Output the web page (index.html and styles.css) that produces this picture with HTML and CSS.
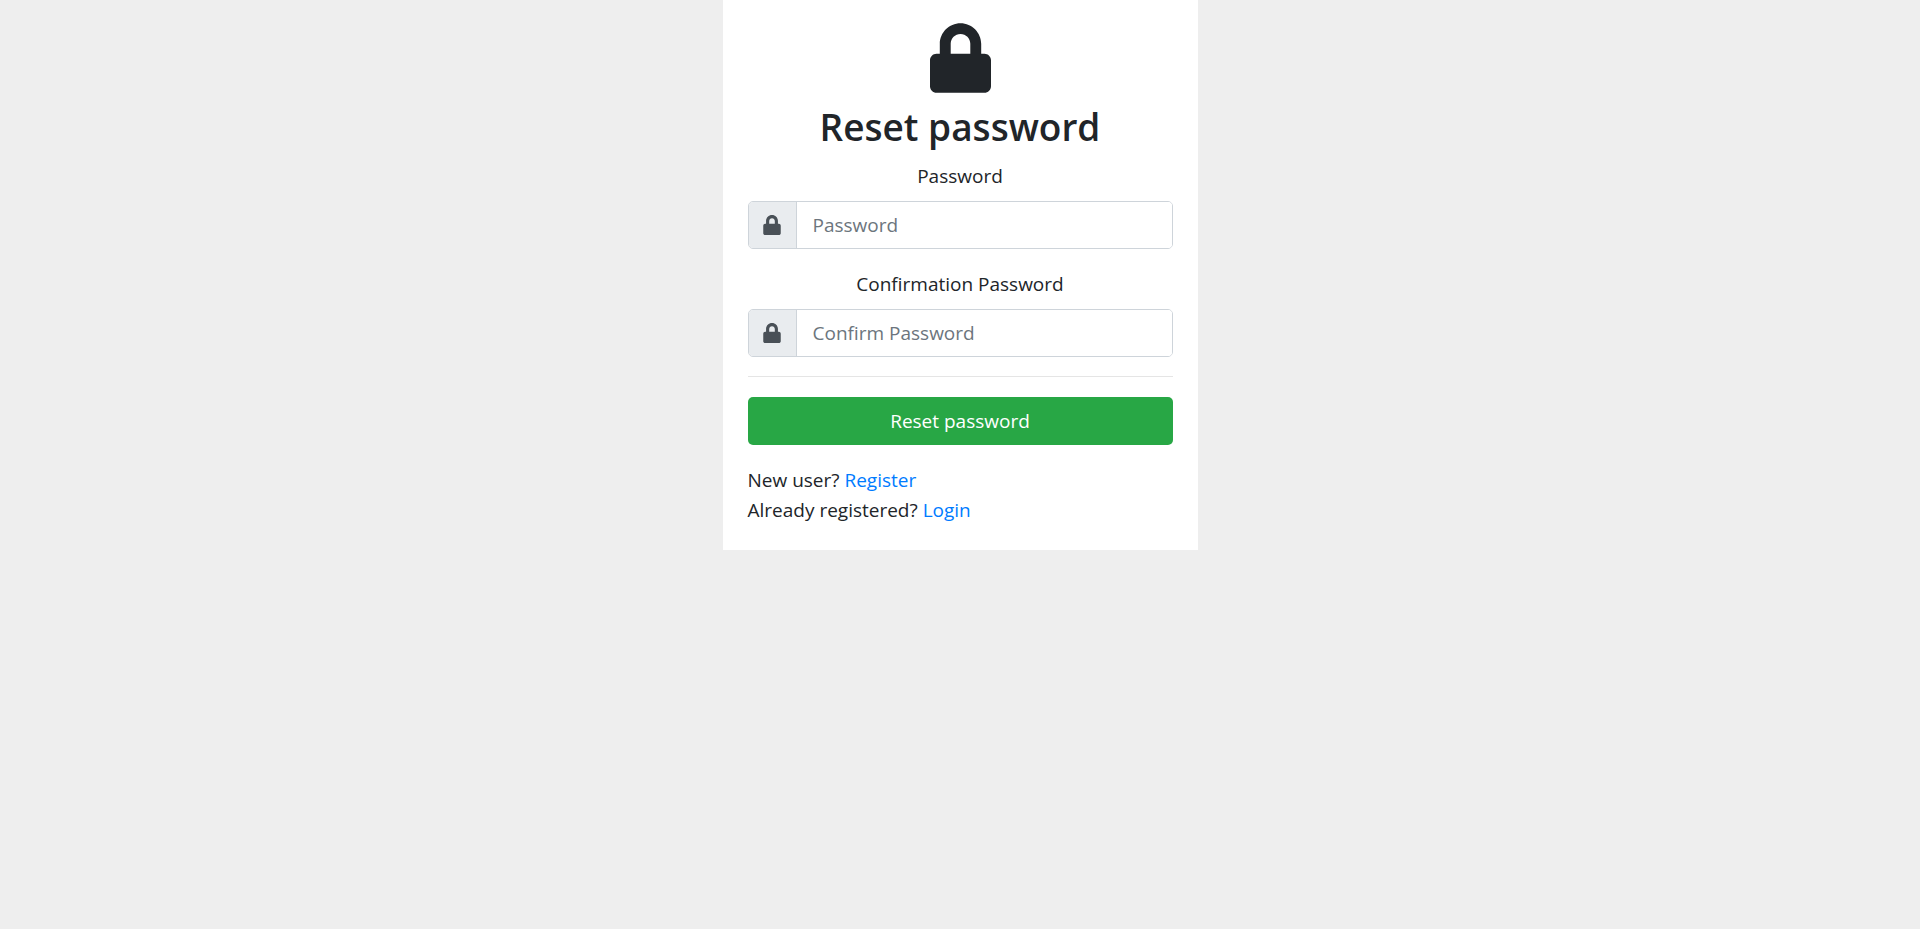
FILE: index.html
```html
<!DOCTYPE html>
<html lang="en">
<head>
<meta charset="utf-8">
<meta name="viewport" content="width=device-width, initial-scale=1">
<title>Reset password</title>
<link rel="stylesheet" href="styles.css">
</head>
<body>
<svg class="sprite" aria-hidden="true">
  <symbol id="lock" viewBox="0 0 448 512">
    <path d="M400 224h-24v-72C376 68.200 307.800 0 224 0S72 68.200 72 152v72H48c-26.500 0-48 21.500-48 48v192c0 26.500 21.500 48 48 48h352c26.500 0 48-21.500 48-48V272c0-26.500-21.500-48-48-48zm-104 0H152v-72c0-39.700 32.300-72 72-72s72 32.300 72 72v72z"/>
  </symbol>
</svg>
<main class="card">
  <svg class="card-icon" aria-hidden="true"><use href="#lock"/></svg>
  <h1 class="title">Reset password</h1>
  <form class="form">
    <div class="field">
      <label class="label" for="password">Password</label>
      <div class="input-group">
        <span class="addon"><svg class="addon-icon" aria-hidden="true"><use href="#lock"/></svg></span>
        <input class="input" id="password" type="password" placeholder="Password">
      </div>
    </div>
    <div class="field">
      <label class="label" for="confirm">Confirmation Password</label>
      <div class="input-group">
        <span class="addon"><svg class="addon-icon" aria-hidden="true"><use href="#lock"/></svg></span>
        <input class="input" id="confirm" type="password" placeholder="Confirm Password">
      </div>
    </div>
    <hr class="divider">
    <button class="submit" type="submit">Reset password</button>
  </form>
  <p class="links">New user? <a class="link" href="#register">Register</a></p>
  <p class="links">Already registered? <a class="link" href="#login">Login</a></p>
</main>
</body>
</html>
```
FILE: styles.css
```css
*, *::before, *::after {
  box-sizing: border-box;
}

body {
  margin: 0;
  background: #eee;
  color: #212529;
  font-family: "Segoe UI", "Open Sans", "Noto Sans", sans-serif;
  font-size: 19px;
  line-height: 30px;
}

.sprite {
  display: none;
}

.card {
  width: 100%;
  max-width: 475px;
  margin: 0 auto;
  padding: 23px 25px 25px;
  background: #fff;
}

.card-icon {
  display: block;
  width: 61px;
  height: 70px;
  margin: 0 auto 10px;
  fill: currentColor;
}

.title {
  margin: 0 0 10px;
  font-size: 37px;
  font-weight: 600;
  line-height: 48px;
  text-align: center;
}

.form {
  margin-bottom: 20px;
}

.field + .field {
  margin-top: 20px;
}

.label {
  display: block;
  margin-bottom: 10px;
  text-align: center;
}

.input-group {
  display: flex;
  height: 48px;
  border: 1px solid #ced4da;
  border-radius: 5px;
}

.input-group:focus-within {
  border-color: #80bdff;
}

.addon {
  display: flex;
  align-items: center;
  justify-content: center;
  width: 48px;
  border-right: 1px solid #ced4da;
  border-radius: 4px 0 0 4px;
  background: #e9ecef;
  color: #495057;
}

.addon-icon {
  width: 18px;
  height: 20px;
  fill: currentColor;
}

.input {
  flex: 1;
  min-width: 0;
  padding: 0 16px;
  border: 0;
  border-radius: 0 4px 4px 0;
  outline: 0;
  background: #fff;
  color: #495057;
  font: inherit;
}

.input::placeholder {
  color: #6c757d;
  opacity: 1;
}

.divider {
  height: 1px;
  margin: 19px 0 20px;
  border: 0;
  background: #e5e5e5;
}

.submit {
  display: block;
  width: 100%;
  height: 48px;
  border: 0;
  border-radius: 5px;
  background: #28a745;
  color: #fff;
  font: inherit;
  cursor: pointer;
}

.links {
  margin: 0;
}

.link {
  color: #007bff;
  text-decoration: none;
}

.link:hover {
  text-decoration: underline;
}
```
